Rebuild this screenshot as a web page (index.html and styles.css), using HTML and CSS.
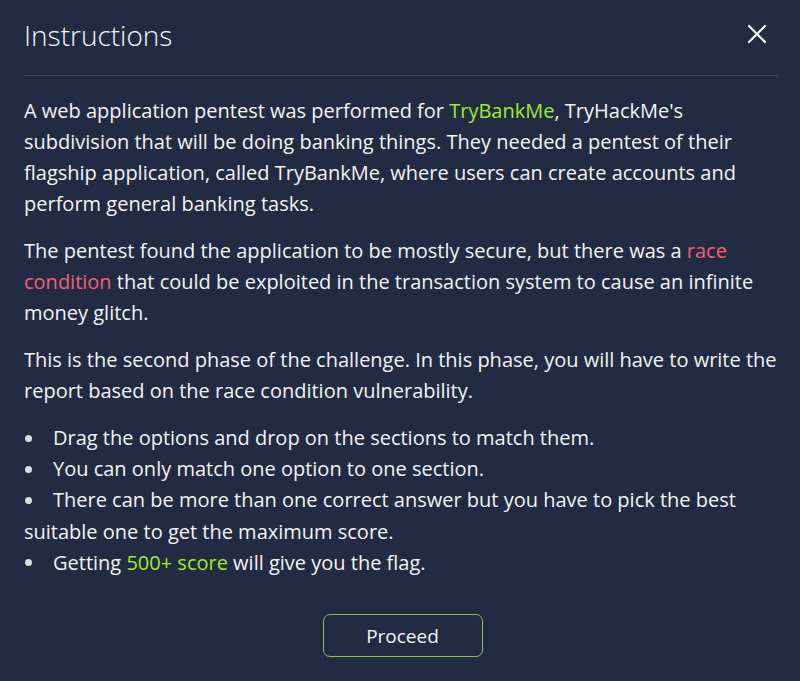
FILE: index.html
```html
<!DOCTYPE html>
<html lang="en">
<head>
<meta charset="utf-8">
<title>Instructions</title>
<link rel="stylesheet" href="styles.css">
</head>
<body>
<div class="modal">
  <header class="modal-header">
    <h1 class="title">Instructions</h1>
    <button class="close" aria-label="Close">
      <svg width="20" height="20" viewBox="0 0 20 20"><path d="M2 2 L18 18 M18 2 L2 18" stroke="#ffffff" stroke-width="2.2" stroke-linecap="round" fill="none"/></svg>
    </button>
  </header>
  <div class="modal-body">
    <p>A web application pentest was performed for <span class="green">TryBankMe</span>, TryHackMe's subdivision that will be doing banking things. They needed a pentest of their flagship application, called TryBankMe, where users can create accounts and perform general banking tasks.</p>
    <p>The pentest found the application to be mostly secure, but there was a <span class="red">race condition</span> that could be exploited in the transaction system to cause an infinite money glitch.</p>
    <p>This is the second phase of the challenge. In this phase, you will have to write the report based on the race condition vulnerability.</p>
    <ul class="list">
      <li><span class="dot"></span>Drag the options and drop on the sections to match them.</li>
      <li><span class="dot"></span>You can only match one option to one section.</li>
      <li><span class="dot"></span>There can be more than one correct answer but you have to pick the best suitable one to get the maximum score.</li>
      <li><span class="dot"></span>Getting <span class="green">500+ score</span> will give you the flag.</li>
    </ul>
  </div>
  <footer class="modal-footer">
    <button class="proceed">Proceed</button>
  </footer>
</div>
</body>
</html>
```
FILE: styles.css
```css
html, body {
  margin: 0;
  padding: 0;
  background: #222b41;
}
body {
  font-family: "Open Sans", "Noto Sans", sans-serif;
  color: #f2f3f5;
  width: 800px;
  height: 681px;
  overflow: hidden;
}
.modal {
  padding: 0 20px 0 24px;
}
.modal-header {
  display: flex;
  justify-content: space-between;
  align-items: center;
  height: 75px;
  border-bottom: 1px solid #3b4560;
  margin-right: 2px;
}
.title {
  margin: 0;
  font-weight: 300;
  font-size: 28px;
  color: #f4f5f7;
  padding-bottom: 6px;
}
.close {
  background: none;
  border: 0;
  padding: 0;
  margin-right: 11px;
  margin-bottom: 8px;
  display: flex;
}
.modal-body {
  padding-top: 19px;
  font-size: 20px;
  line-height: 31px;
}
.modal-body p {
  margin: 0 0 16px 0;
}
.green { color: #a3ea2a; }
.red { color: #f2607a; }
.list {
  list-style: none;
  margin: 0;
  padding: 0;
}
.list li {
  margin: 0;
  line-height: 31.2px;
}
.dot {
  display: inline-block;
  width: 7px;
  height: 7px;
  border-radius: 50%;
  background: #d9dce3;
  margin: 0 21px 3px 1px;
  vertical-align: middle;
}
.modal-footer {
  display: flex;
  justify-content: center;
  padding-top: 36px;
}
.proceed {
  width: 160px;
  height: 43px;
  background: transparent;
  border: 1.5px solid #8bc34a;
  border-radius: 7px;
  color: #f4f5f7;
  font-family: inherit;
  font-size: 19px;
  margin-left: 1px;
}
```
